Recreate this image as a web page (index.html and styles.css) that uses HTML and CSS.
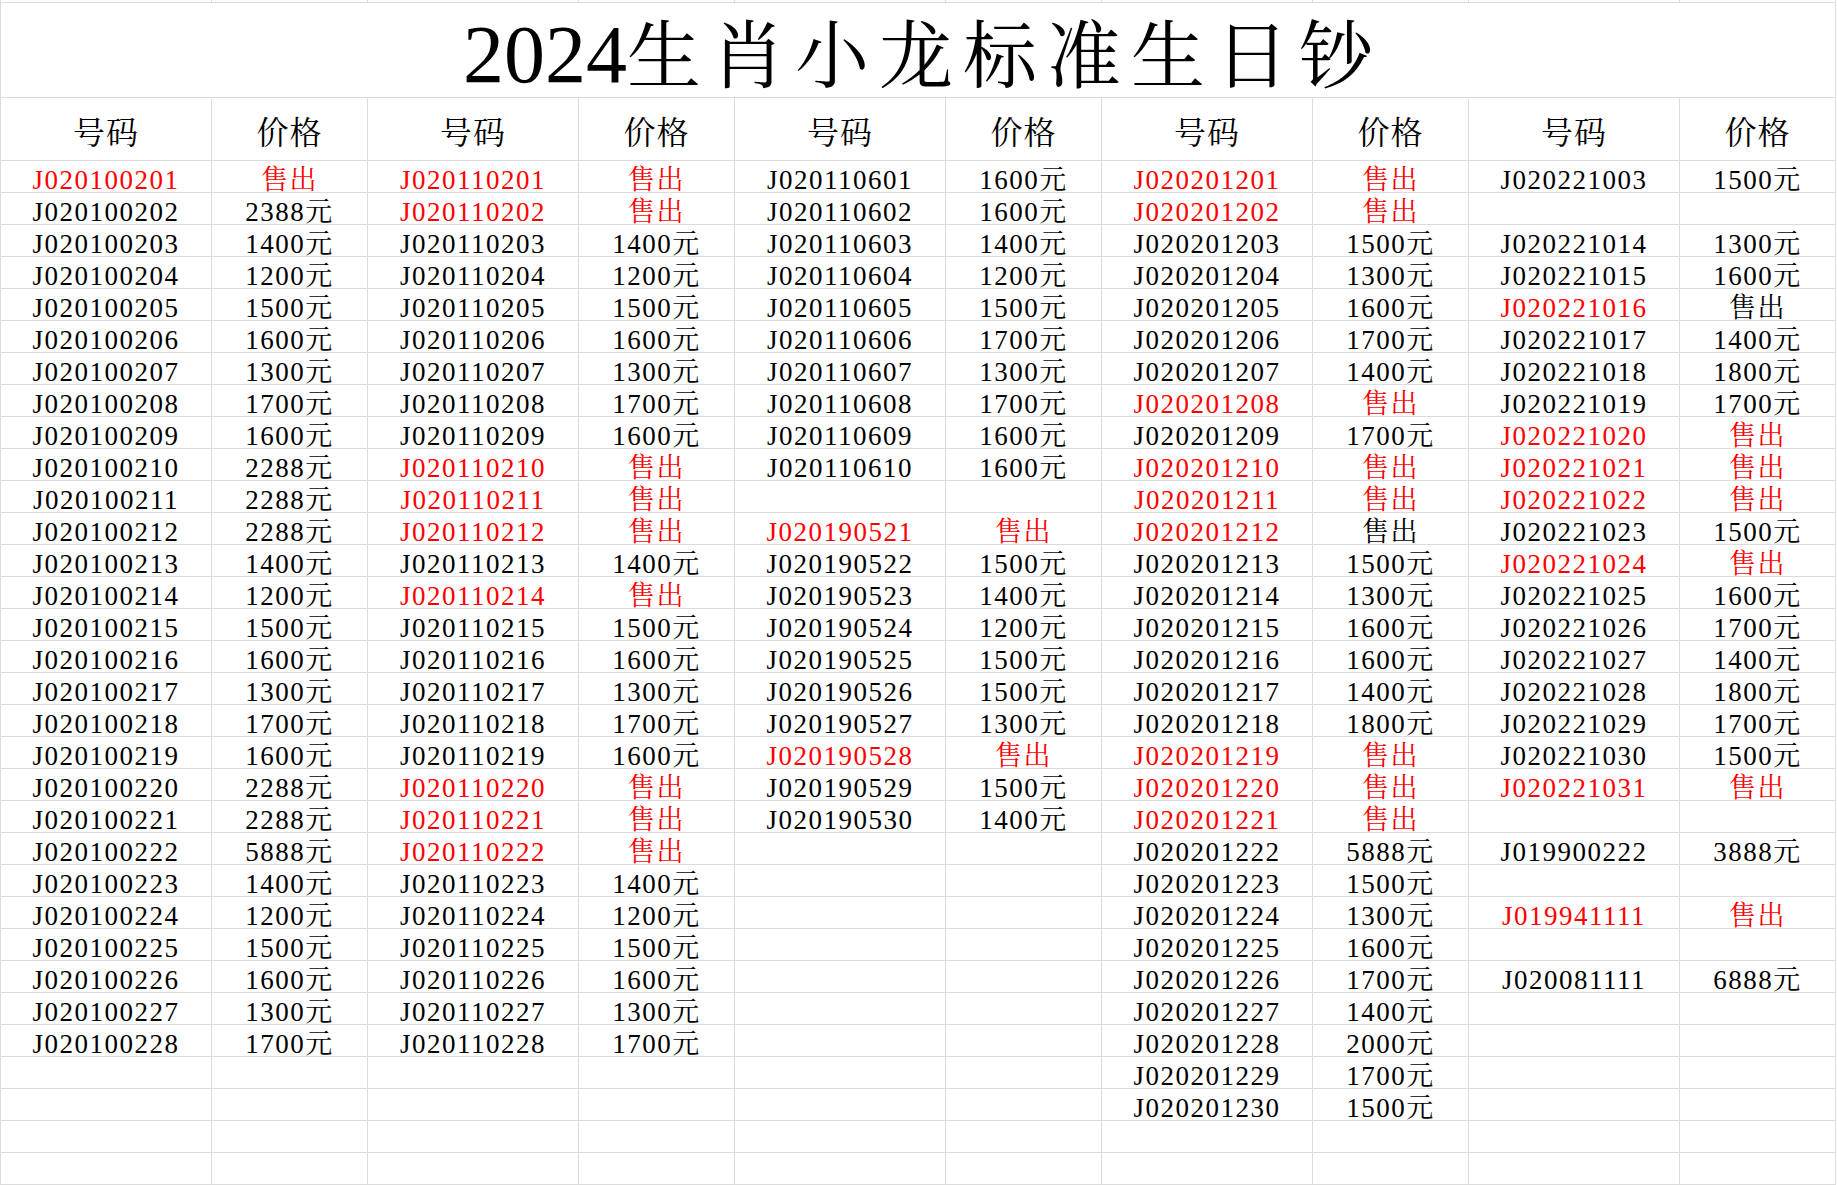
FILE: index.html
```html
<!DOCTYPE html>
<html lang="zh-CN">
<head>
<meta charset="utf-8">
<title>2024生肖小龙标准生日钞</title>
<link rel="stylesheet" href="styles.css">
</head>
<body>
<div class="sheet">
<div class="s"></div><div class="s"></div><div class="s"></div><div class="s"></div><div class="s"></div><div class="s"></div><div class="s"></div><div class="s"></div><div class="s"></div><div class="s"></div>
<div class="title"><span class="yr">2024</span>生肖小龙标准生日钞</div>
<div class="h">号码</div><div class="h">价格</div><div class="h">号码</div><div class="h">价格</div><div class="h">号码</div><div class="h">价格</div><div class="h">号码</div><div class="h">价格</div><div class="h">号码</div><div class="h">价格</div>

<div class="r">J020100201</div><div class="r">售出</div><div class="r">J020110201</div><div class="r">售出</div><div>J020110601</div><div>1600元</div><div class="r">J020201201</div><div class="r">售出</div><div>J020221003</div><div>1500元</div>
<div>J020100202</div><div>2388元</div><div class="r">J020110202</div><div class="r">售出</div><div>J020110602</div><div>1600元</div><div class="r">J020201202</div><div class="r">售出</div><div></div><div></div>
<div>J020100203</div><div>1400元</div><div>J020110203</div><div>1400元</div><div>J020110603</div><div>1400元</div><div>J020201203</div><div>1500元</div><div>J020221014</div><div>1300元</div>
<div>J020100204</div><div>1200元</div><div>J020110204</div><div>1200元</div><div>J020110604</div><div>1200元</div><div>J020201204</div><div>1300元</div><div>J020221015</div><div>1600元</div>
<div>J020100205</div><div>1500元</div><div>J020110205</div><div>1500元</div><div>J020110605</div><div>1500元</div><div>J020201205</div><div>1600元</div><div class="r">J020221016</div><div>售出</div>
<div>J020100206</div><div>1600元</div><div>J020110206</div><div>1600元</div><div>J020110606</div><div>1700元</div><div>J020201206</div><div>1700元</div><div>J020221017</div><div>1400元</div>
<div>J020100207</div><div>1300元</div><div>J020110207</div><div>1300元</div><div>J020110607</div><div>1300元</div><div>J020201207</div><div>1400元</div><div>J020221018</div><div>1800元</div>
<div>J020100208</div><div>1700元</div><div>J020110208</div><div>1700元</div><div>J020110608</div><div>1700元</div><div class="r">J020201208</div><div class="r">售出</div><div>J020221019</div><div>1700元</div>
<div>J020100209</div><div>1600元</div><div>J020110209</div><div>1600元</div><div>J020110609</div><div>1600元</div><div>J020201209</div><div>1700元</div><div class="r">J020221020</div><div class="r">售出</div>
<div>J020100210</div><div>2288元</div><div class="r">J020110210</div><div class="r">售出</div><div>J020110610</div><div>1600元</div><div class="r">J020201210</div><div class="r">售出</div><div class="r">J020221021</div><div class="r">售出</div>
<div>J020100211</div><div>2288元</div><div class="r">J020110211</div><div class="r">售出</div><div></div><div></div><div class="r">J020201211</div><div class="r">售出</div><div class="r">J020221022</div><div class="r">售出</div>
<div>J020100212</div><div>2288元</div><div class="r">J020110212</div><div class="r">售出</div><div class="r">J020190521</div><div class="r">售出</div><div class="r">J020201212</div><div>售出</div><div>J020221023</div><div>1500元</div>
<div>J020100213</div><div>1400元</div><div>J020110213</div><div>1400元</div><div>J020190522</div><div>1500元</div><div>J020201213</div><div>1500元</div><div class="r">J020221024</div><div class="r">售出</div>
<div>J020100214</div><div>1200元</div><div class="r">J020110214</div><div class="r">售出</div><div>J020190523</div><div>1400元</div><div>J020201214</div><div>1300元</div><div>J020221025</div><div>1600元</div>
<div>J020100215</div><div>1500元</div><div>J020110215</div><div>1500元</div><div>J020190524</div><div>1200元</div><div>J020201215</div><div>1600元</div><div>J020221026</div><div>1700元</div>
<div>J020100216</div><div>1600元</div><div>J020110216</div><div>1600元</div><div>J020190525</div><div>1500元</div><div>J020201216</div><div>1600元</div><div>J020221027</div><div>1400元</div>
<div>J020100217</div><div>1300元</div><div>J020110217</div><div>1300元</div><div>J020190526</div><div>1500元</div><div>J020201217</div><div>1400元</div><div>J020221028</div><div>1800元</div>
<div>J020100218</div><div>1700元</div><div>J020110218</div><div>1700元</div><div>J020190527</div><div>1300元</div><div>J020201218</div><div>1800元</div><div>J020221029</div><div>1700元</div>
<div>J020100219</div><div>1600元</div><div>J020110219</div><div>1600元</div><div class="r">J020190528</div><div class="r">售出</div><div class="r">J020201219</div><div class="r">售出</div><div>J020221030</div><div>1500元</div>
<div>J020100220</div><div>2288元</div><div class="r">J020110220</div><div class="r">售出</div><div>J020190529</div><div>1500元</div><div class="r">J020201220</div><div class="r">售出</div><div class="r">J020221031</div><div class="r">售出</div>
<div>J020100221</div><div>2288元</div><div class="r">J020110221</div><div class="r">售出</div><div>J020190530</div><div>1400元</div><div class="r">J020201221</div><div class="r">售出</div><div></div><div></div>
<div>J020100222</div><div>5888元</div><div class="r">J020110222</div><div class="r">售出</div><div></div><div></div><div>J020201222</div><div>5888元</div><div>J019900222</div><div>3888元</div>
<div>J020100223</div><div>1400元</div><div>J020110223</div><div>1400元</div><div></div><div></div><div>J020201223</div><div>1500元</div><div></div><div></div>
<div>J020100224</div><div>1200元</div><div>J020110224</div><div>1200元</div><div></div><div></div><div>J020201224</div><div>1300元</div><div class="r">J019941111</div><div class="r">售出</div>
<div>J020100225</div><div>1500元</div><div>J020110225</div><div>1500元</div><div></div><div></div><div>J020201225</div><div>1600元</div><div></div><div></div>
<div>J020100226</div><div>1600元</div><div>J020110226</div><div>1600元</div><div></div><div></div><div>J020201226</div><div>1700元</div><div>J020081111</div><div>6888元</div>
<div>J020100227</div><div>1300元</div><div>J020110227</div><div>1300元</div><div></div><div></div><div>J020201227</div><div>1400元</div><div></div><div></div>
<div>J020100228</div><div>1700元</div><div>J020110228</div><div>1700元</div><div></div><div></div><div>J020201228</div><div>2000元</div><div></div><div></div>
<div></div><div></div><div></div><div></div><div></div><div></div><div>J020201229</div><div>1700元</div><div></div><div></div>
<div></div><div></div><div></div><div></div><div></div><div></div><div>J020201230</div><div>1500元</div><div></div><div></div>
<div></div><div></div><div></div><div></div><div></div><div></div><div></div><div></div><div></div><div></div>
<div></div><div></div><div></div><div></div><div></div><div></div><div></div><div></div><div></div><div></div>
</div>
</body>
</html>
```
FILE: styles.css
```css
html, body {
  margin: 0;
  padding: 0;
  background: #ffffff;
}

.sheet {
  display: grid;
  grid-template-columns: repeat(5, 211px 156px);
  width: max-content;
  border-left: 1px solid #dcdcdc;
  font-family: "Liberation Serif", "Noto Serif CJK SC", "Noto Sans CJK SC", serif;
  color: #000000;
}

.sheet > div {
  box-sizing: border-box;
  height: 32px;
  border-right: 1px solid #dcdcdc;
  border-bottom: 1px solid #dcdcdc;
  text-align: center;
  white-space: nowrap;
  font-size: 27px;
  letter-spacing: 1.5px;
  line-height: 27px;
  padding-top: 6px;
}

.sheet > .s {
  height: 3px;
  padding: 0;
}

.sheet > .title {
  grid-column: 1 / -1;
  height: 95px;
  font-size: 74px;
  line-height: 80px;
  letter-spacing: 10px;
  padding-top: 12px;
  padding-left: 10px;
}

.title .yr {
  font-size: 82px;
  letter-spacing: 0;
}

.sheet > .h {
  height: 63px;
  font-size: 32px;
  line-height: 40px;
  letter-spacing: 1px;
  padding-top: 15px;
}

.sheet > .r {
  color: #ff0000;
}
```
